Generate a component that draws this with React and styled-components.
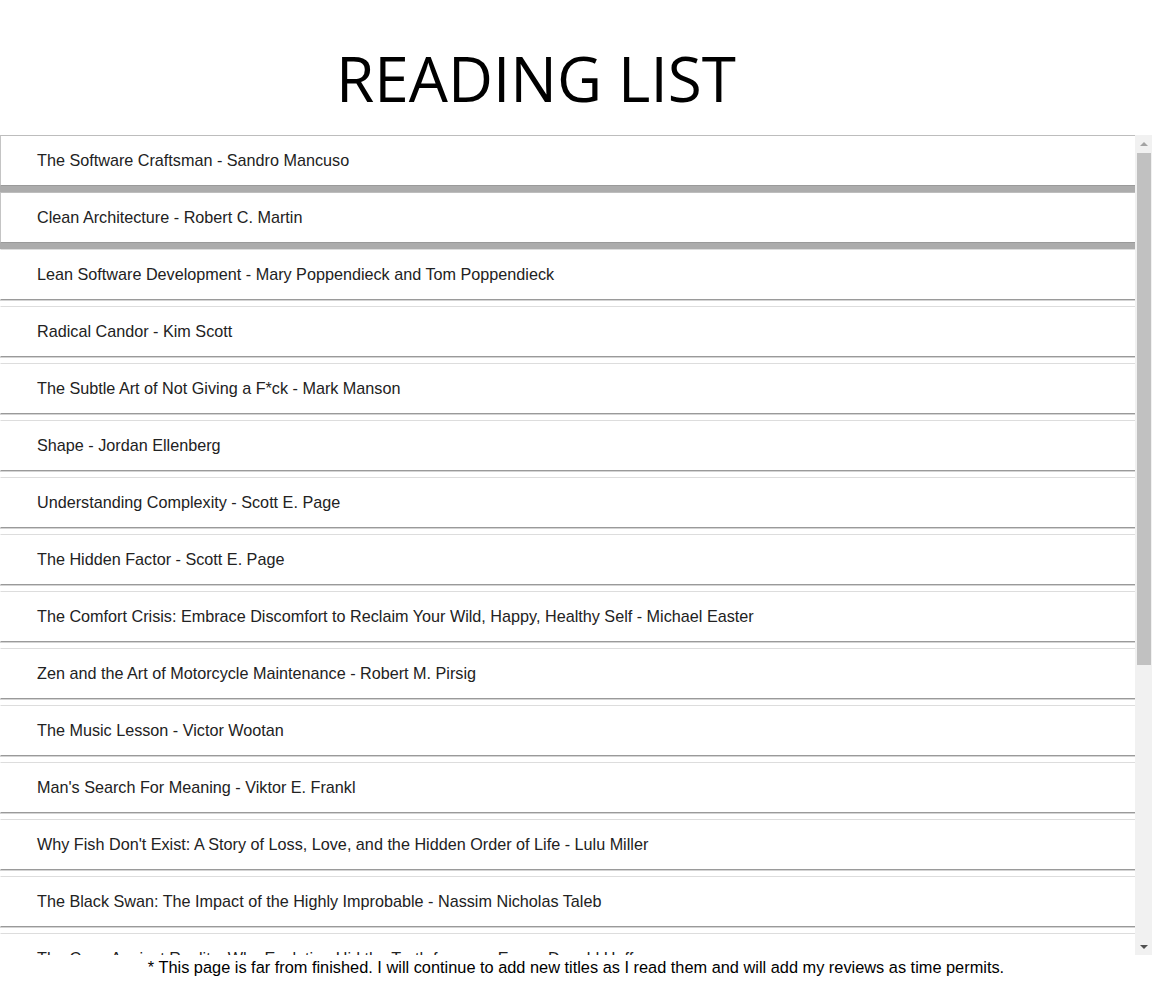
import React from 'react';
import styled, { createGlobalStyle } from 'styled-components';

const GlobalStyle = createGlobalStyle`
  html, body {
    margin: 0;
    padding: 0;
    background: #ffffff;
  }
  body {
    font-family: "Liberation Sans", Arial, sans-serif;
    overflow: hidden;
  }
`;

const Page = styled.div`
  width: 1152px;
  height: 990px;
  display: flex;
  flex-direction: column;
`;

const Title = styled.h1`
  margin: 47px 0 26px 0;
  padding-right: 80px;
  text-align: center;
  font-family: "Open Sans", "Noto Sans", sans-serif;
  font-size: 62px;
  font-weight: 400;
  line-height: 62px;
  color: #000000;
`;

const ListFrame = styled.div`
  display: flex;
  height: 820px;
`;

const ListBox = styled.ul`
  flex: 1;
  list-style: none;
  margin: 0;
  padding: 0;
  overflow: hidden;
  scrollbar-width: none;
  background: #ffffff;
`;

const ScrollTrack = styled.div`
  width: 17px;
  display: flex;
  flex-direction: column;
  background: #f1f1f1;
`;

const ScrollArrow = styled.div`
  height: 17px;
  display: flex;
  align-items: center;
  justify-content: center;
`;

const Triangle = styled.span`
  width: 0;
  height: 0;
  border-left: 4px solid transparent;
  border-right: 4px solid transparent;
  ${p =>
    p.$down
      ? 'border-top: 4px solid #505050;'
      : 'border-bottom: 4px solid #a3a3a3;'}
`;

const ScrollThumb = styled.div`
  height: 512px;
  margin: 1px 1px 0 2px;
  background: #c1c1c1;
`;

const Spacer = styled.div`
  flex: 1;
`;

const Item = styled.li`
  height: 49px;
  margin-bottom: 6px;
  display: flex;
  align-items: center;
  padding-left: 36px;
  background: #ffffff;
  border-top: 1px solid ${p => (p.$raised ? '#bdbdbd' : '#dddddd')};
  border-bottom: 1px solid #9a9a9a;
  border-left: 1px solid ${p => (p.$raised ? '#c4c4c4' : 'transparent')};
  box-shadow: ${p => (p.$raised ? '0 7px 0 #acacac' : '0 1px 0 #d4d4d4')};
  font-size: 16.2px;
  color: #222222;
  white-space: nowrap;
`;

const Footer = styled.p`
  margin: 3px 0 0 0;
  text-align: center;
  font-size: 16.35px;
  line-height: 18px;
  color: #000000;
  white-space: nowrap;
`;

const books = [
  'The Software Craftsman - Sandro Mancuso',
  'Clean Architecture - Robert C. Martin',
  'Lean Software Development - Mary Poppendieck and Tom Poppendieck',
  'Radical Candor - Kim Scott',
  'The Subtle Art of Not Giving a F*ck - Mark Manson',
  'Shape - Jordan Ellenberg',
  'Understanding Complexity - Scott E. Page',
  'The Hidden Factor - Scott E. Page',
  'The Comfort Crisis: Embrace Discomfort to Reclaim Your Wild, Happy, Healthy Self - Michael Easter',
  'Zen and the Art of Motorcycle Maintenance - Robert M. Pirsig',
  'The Music Lesson - Victor Wootan',
  "Man's Search For Meaning - Viktor E. Frankl",
  "Why Fish Don't Exist: A Story of Loss, Love, and the Hidden Order of Life - Lulu Miller",
  'The Black Swan: The Impact of the Highly Improbable - Nassim Nicholas Taleb',
  'The Case Against Reality: Why Evolution Hid the Truth from our Eyes - Donald Hoffman',
];

const App = () => (
  <>
    <GlobalStyle />
    <Page>
      <Title>READING LIST</Title>
      <ListFrame>
        <ListBox>
          {books.map((book, index) => (
            <Item key={index} $raised={index < 2}>
              {book}
            </Item>
          ))}
        </ListBox>
        <ScrollTrack>
          <ScrollArrow>
            <Triangle />
          </ScrollArrow>
          <ScrollThumb />
          <Spacer />
          <ScrollArrow>
            <Triangle $down />
          </ScrollArrow>
        </ScrollTrack>
      </ListFrame>
      <Footer>
        * This page is far from finished. I will continue to add new titles as I read them and will add my reviews as time permits.
      </Footer>
    </Page>
  </>
);

export default App;
